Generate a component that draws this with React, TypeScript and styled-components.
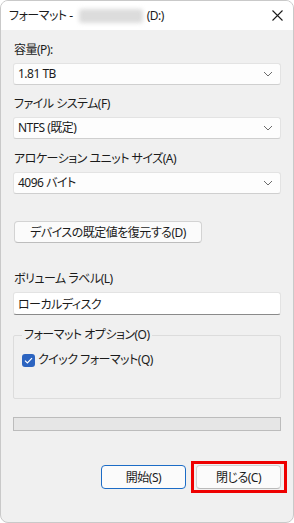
import React from 'react';
import styled, { createGlobalStyle } from 'styled-components';

const GlobalStyle = createGlobalStyle`
  html, body {
    margin: 0;
    padding: 0;
    background: #ffffff;
  }
  body {
    font-family: 'Noto Sans', 'Noto Sans CJK JP', sans-serif;
    font-size: 12px;
    color: #1b1b1b;
    font-feature-settings: 'palt';
    letter-spacing: -0.5px;
  }
`;

const Window = styled.div`
  width: 294px;
  height: 523px;
  box-sizing: border-box;
  border: 1px solid #c9c9c9;
  border-radius: 8px;
  overflow: hidden;
  background: #f0f0f0;
  display: flex;
  flex-direction: column;
`;

const TitleBar = styled.div`
  height: 29px;
  flex: none;
  background: #ffffff;
  display: flex;
  align-items: center;
  padding: 0 8px 0 8px;
`;

const Title = styled.div`
  flex: 1;
  display: flex;
  align-items: center;
  font-size: 12px;
  line-height: 16px;
  color: #1b1b1b;
`;

const Blurred = styled.span`
  display: inline-block;
  width: 64px;
  height: 14px;
  margin: 0 4px 0 6px;
  background: #dcdcdc;
  border-radius: 3px;
  filter: blur(2px);
`;

const CloseButton = styled.div`
  width: 20px;
  height: 20px;
  display: flex;
  align-items: center;
  justify-content: center;
  margin-right: -2px;
`;

const Body = styled.div`
  flex: 1;
  display: flex;
  flex-direction: column;
  padding: 12px 12px 0 12px;
`;

const Label = styled.div<{ $gap?: number }>`
  line-height: 16px;
  margin-top: ${({ $gap }) => $gap ?? 0}px;
  margin-bottom: 5px;
  padding-left: 1px;
`;

const Combo = styled.div`
  height: 22px;
  box-sizing: border-box;
  background: #fdfdfd;
  border: 1px solid #e3e3e3;
  border-bottom-color: #cfcfcf;
  border-radius: 3px;
  display: flex;
  align-items: center;
  justify-content: space-between;
  padding: 0 7px 0 4px;
  line-height: 16px;
`;

const TextInput = styled.div`
  height: 23px;
  box-sizing: border-box;
  background: #ffffff;
  border: 1px solid #e3e3e3;
  border-bottom: 1px solid #8a8a8a;
  border-radius: 3px;
  display: flex;
  align-items: center;
  padding: 0 4px;
`;

const RestoreButton = styled.div`
  align-self: flex-start;
  margin-top: 27px;
  margin-left: 1px;
  width: 188px;
  height: 22px;
  box-sizing: border-box;
  background: #fbfbfb;
  border: 1px solid #d3d3d3;
  border-bottom-color: #bdbdbd;
  border-radius: 4px;
  display: flex;
  align-items: center;
  justify-content: center;
`;

const GroupBox = styled.fieldset`
  margin: 12px 0 0 0;
  padding: 9px 8px 0 8px;
  height: 72px;
  box-sizing: border-box;
  border: 1px solid #dcdcdc;
  border-radius: 2px;
  min-width: 0;
`;

const Legend = styled.legend`
  padding: 0 2px;
  margin-left: 0;
  line-height: 16px;
`;

const CheckRow = styled.label`
  display: flex;
  align-items: center;
  gap: 3px;
  line-height: 16px;
`;

const CheckBox = styled.span`
  width: 13px;
  height: 13px;
  border-radius: 3px;
  background: #2c64c0;
  display: flex;
  align-items: center;
  justify-content: center;
`;

const Progress = styled.div`
  margin-top: 18px;
  height: 14px;
  box-sizing: border-box;
  background: #e6e6e6;
  border: 1px solid #bcbcbc;
`;

const ButtonRow = styled.div`
  margin-top: 34px;
  display: flex;
  justify-content: flex-end;
  gap: 10px;
`;

const Highlight = styled.div`
  margin: -4px -6px -4px -5px;
  border: 3px solid #ee0000;
  padding: 1px 3px 1px 2px;
  display: flex;
`;

const PushButton = styled.div<{ $primary?: boolean }>`
  width: 85px;
  height: 24px;
  box-sizing: border-box;
  background: #fbfbfb;
  border: 1px solid ${({ $primary }) => ($primary ? '#1c6cc6' : '#d0d0d0')};
  border-bottom-color: ${({ $primary }) => ($primary ? '#1c6cc6' : '#bababa')};
  border-radius: 4px;
  display: flex;
  align-items: center;
  justify-content: center;
`;

const Chevron = () => (
  <svg width="10" height="6" viewBox="0 0 10 6">
    <path d="M1 1 L5 5 L9 1" fill="none" stroke="#6b6b6b" strokeWidth="1" />
  </svg>
);

const CloseIcon = () => (
  <svg width="11" height="11" viewBox="0 0 11 11">
    <path d="M0.5 0.5 L10.5 10.5 M10.5 0.5 L0.5 10.5" stroke="#1b1b1b" strokeWidth="1.1" />
  </svg>
);

const CheckMark = () => (
  <svg width="9" height="7" viewBox="0 0 9 7">
    <path d="M1 3.6 L3.4 6 L8 1.2" fill="none" stroke="#ffffff" strokeWidth="1.2" />
  </svg>
);

const App = () => (
  <>
    <GlobalStyle />
    <Window>
      <TitleBar>
        <Title>
          フォーマット -<Blurred />(D:)
        </Title>
        <CloseButton>
          <CloseIcon />
        </CloseButton>
      </TitleBar>
      <Body>
        <Label>容量(P):</Label>
        <Combo>
          <span>1.81 TB</span>
          <Chevron />
        </Combo>
        <Label $gap={11}>ファイル システム(F)</Label>
        <Combo>
          <span>NTFS (既定)</span>
          <Chevron />
        </Combo>
        <Label $gap={12}>アロケーション ユニット サイズ(A)</Label>
        <Combo>
          <span>4096 バイト</span>
          <Chevron />
        </Combo>
        <RestoreButton>デバイスの既定値を復元する(D)</RestoreButton>
        <Label $gap={28}>ボリューム ラベル(L)</Label>
        <TextInput>ローカルディスク</TextInput>
        <GroupBox>
          <Legend>フォーマット オプション(O)</Legend>
          <CheckRow>
            <CheckBox>
              <CheckMark />
            </CheckBox>
            クイック フォーマット(Q)
          </CheckRow>
        </GroupBox>
        <Progress />
        <ButtonRow>
          <PushButton $primary>開始(S)</PushButton>
          <Highlight>
            <PushButton>閉じる(C)</PushButton>
          </Highlight>
        </ButtonRow>
      </Body>
    </Window>
  </>
);

export default App;
